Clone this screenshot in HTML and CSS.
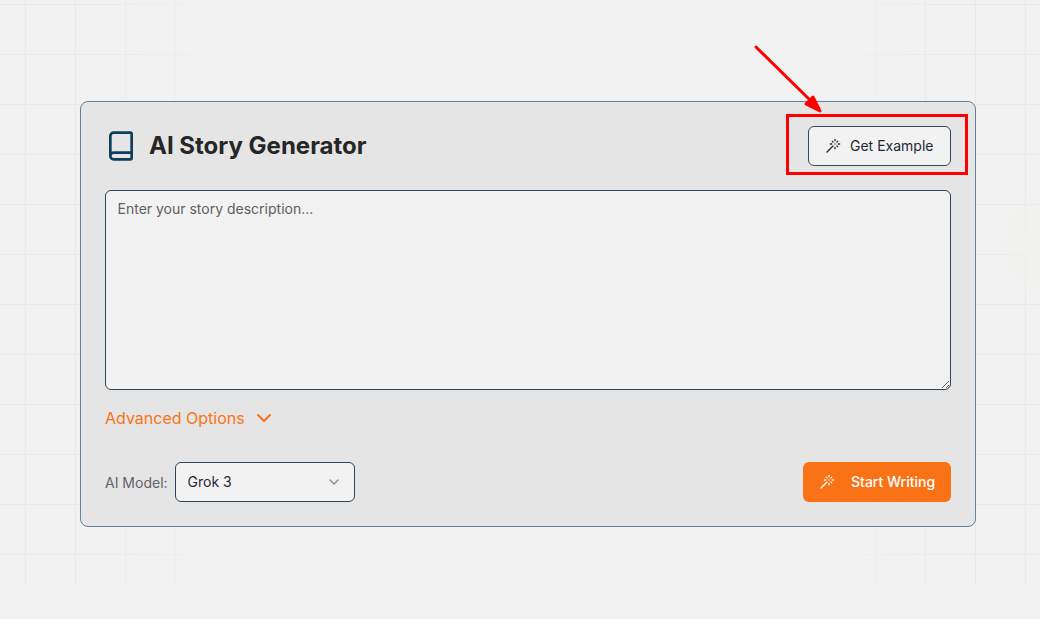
FILE: index.html
```html
<!DOCTYPE html>
<html lang="en">
<head>
	<meta charset="UTF-8">
	<title>AI Story Generator</title>
	<link rel="stylesheet" href="styles.css">
</head>
<body>
	<div class="grid"></div>
	<div class="glow"></div>
	<main class="card">
		<header class="head">
			<h1 class="title">
				<svg class="book" viewBox="0 0 24 24"><path d="M4 19.5v-15A2.5 2.5 0 0 1 6.5 2H19a1 1 0 0 1 1 1v18a1 1 0 0 1-1 1H6.5a1 1 0 0 1 0-5H20"/></svg>
				<span class="name">AI Story Generator</span>
			</h1>
			<button class="btn example">
				<svg class="wand" viewBox="0 0 24 24"><path d="M15 4V2M15 16v-2M8 9h2M20 9h2M17.8 11.8 19 13M15 9h.01M17.8 6.2 19 5M3 21l9-9M12.2 6.2 11 5"/></svg>
				<span class="txt">Get Example</span>
			</button>
		</header>
		<textarea class="story" placeholder="Enter your story description..."></textarea>
		<div class="advanced">
			Advanced Options
			<svg class="chev" viewBox="0 0 24 24"><path d="m6 9 6 6 6-6"/></svg>
		</div>
		<footer class="foot">
			<div class="model">
				<span class="label">AI Model:</span>
				<div class="select">
					<span class="txt">Grok 3</span>
					<svg class="arrow" viewBox="0 0 24 24"><path d="m6 9 6 6 6-6"/></svg>
				</div>
			</div>
			<button class="btn start">
				<svg class="wand" viewBox="0 0 24 24"><path d="M15 4V2M15 16v-2M8 9h2M20 9h2M17.8 11.8 19 13M15 9h.01M17.8 6.2 19 5M3 21l9-9M12.2 6.2 11 5"/></svg>
				<span class="txt">Start Writing</span>
			</button>
		</footer>
	</main>

	<!-- annotation -->
	<div class="mark"></div>
	<svg class="pointer" viewBox="0 0 1040 619">
		<line x1="756" y1="47" x2="811" y2="101"/>
		<polygon points="820,111 806,104 813,97"/>
	</svg>
</body>
</html>
```

FILE: styles.css
```css
*{
	box-sizing: border-box;
}
html,body{
	height: 100%;
	margin: 0;
	overflow: hidden;
}
body{
	padding: 101px 64px 0 80px;
	font-family: Inter, "Liberation Sans", sans-serif;
	color: #1f2937;
	background-color: #f2f2f2;
}
svg{
	fill: none;
	stroke: currentColor;
	stroke-width: 2;
	stroke-linecap: round;
	stroke-linejoin: round;
	flex: none;
}
/* background */
.grid{
	position: absolute;
	top: 0;
	left: 0;
	width: 100%;
	height: 584px;
	background-image:
		linear-gradient(#e9e9e9 1px, transparent 1px),
		linear-gradient(90deg, #e9e9e9 1px, transparent 1px);
	background-size: 50px 50px;
	background-position: 25px 4px;
	-webkit-mask-image: linear-gradient(90deg, black 0, black 8%, transparent 24%, transparent 78%, black 92%);
	mask-image: linear-gradient(90deg, black 0, black 8%, transparent 24%, transparent 78%, black 92%);
}
.glow{
	position: absolute;
	top: 190px;
	left: 990px;
	width: 100px;
	height: 110px;
	background-image: radial-gradient(closest-side, #f0f2ec, transparent);
}
.card{
	position: relative;
	width: 896px;
	height: 426px;
	padding: 24px;
	background-color: #e5e5e5;
	border: 1px solid #5f84a0;
	border-radius: 8px;
}
.head{
	display: flex;
	justify-content: space-between;
	align-items: center;
	height: 40px;
	margin-bottom: 24px;
}
.title{
	display: flex;
	align-items: center;
	gap: 12px;
	margin: 0;
	font-size: 24px;
	font-weight: 700;
	color: #262626;
}
.name{
	margin-top: -2px;
}
.txt{
	margin-top: -1px;
	white-space: nowrap;
}
.book{
	width: 32px;
	height: 32px;
	color: #0f3d5c;
}
.btn{
	display: flex;
	align-items: center;
	height: 40px;
	border-radius: 6px;
	font-family: inherit;
	font-size: 14px;
	font-weight: 500;
}
.wand{
	width: 16px;
	height: 16px;
	stroke-width: 2;
}
.example{
	gap: 9px;
	width: 143px;
	padding: 0 16px;
	font-weight: 400;
	color: #1f2937;
	background-color: #f2f2f2;
	border: 1px solid #334a5e;
}
.story{
	display: block;
	width: 100%;
	height: 200px;
	padding: 9px 11.5px;
	font-family: inherit;
	font-size: 14px;
	line-height: 18px;
	background-color: #f2f2f2;
	border: 1px solid #2f4558;
	border-radius: 6px;
}
.story::placeholder{
	color: #5f5f5f;
	opacity: 1;
}
.advanced{
	display: flex;
	align-items: center;
	gap: 7px;
	height: 24px;
	margin-top: 16px;
	font-size: 16px;
	color: #f97316;
}
.chev{
	width: 24px;
	height: 24px;
}
.foot{
	display: flex;
	justify-content: space-between;
	align-items: center;
	margin-top: 32px;
}
.model{
	display: flex;
	align-items: center;
	gap: 7px;
}
.label{
	font-size: 14px;
	color: #5f6368;
}
.select{
	display: flex;
	justify-content: space-between;
	align-items: center;
	width: 180px;
	height: 40px;
	padding: 0 12px;
	font-size: 14px;
	background-color: #f2f2f2;
	border: 1px solid #2f4558;
	border-radius: 6px;
}
.arrow{
	width: 16px;
	height: 16px;
	color: #8a8a8a;
}
.start{
	gap: 16px;
	width: 148px;
	padding: 0 16px;
	color: white;
	font-weight: 500;
	background-color: #f97316;
	border: none;
}
/* annotation */
.mark{
	position: absolute;
	top: 114px;
	left: 786px;
	width: 182px;
	height: 61px;
	border: 3px solid #f00;
}
.pointer{
	position: absolute;
	top: 0;
	left: 0;
	width: 1040px;
	height: 619px;
	color: #f00;
	fill: #f00;
	stroke-width: 3;
}
```
